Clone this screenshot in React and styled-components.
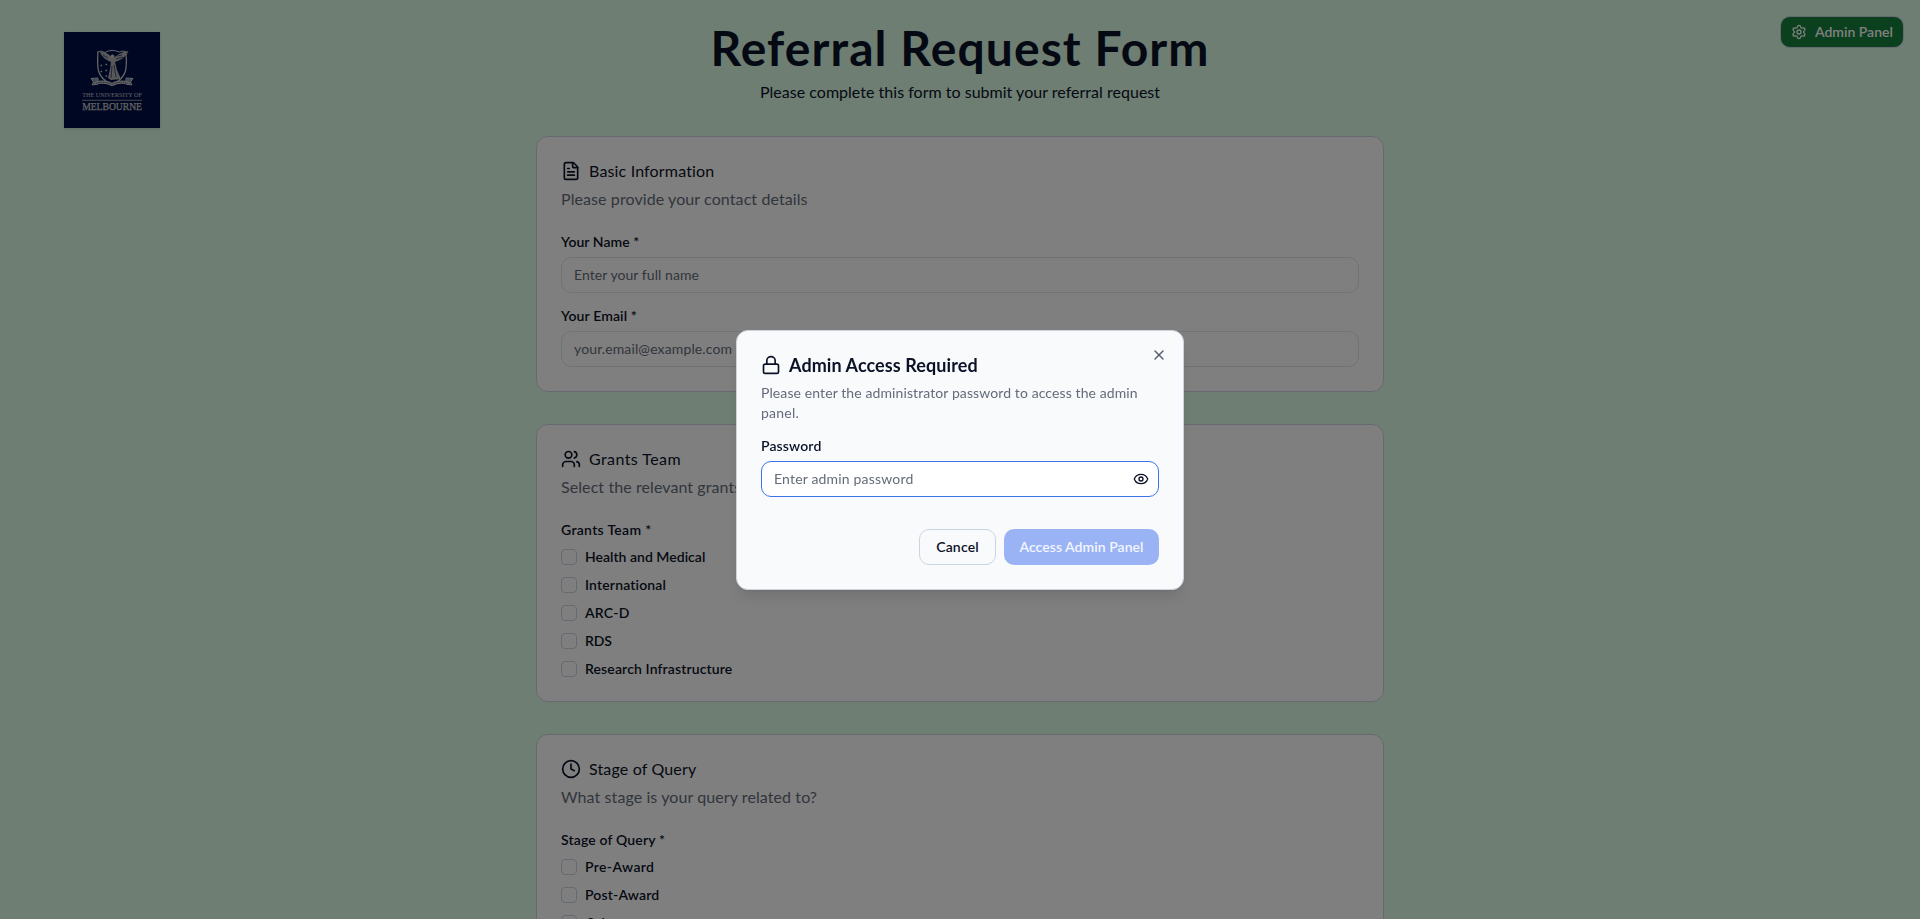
import React from 'react';
import styled, { createGlobalStyle } from 'styled-components';
import { FileText, Users, Clock, Settings, Lock, X, Eye } from 'lucide-react';

const ink = '#0b1226';
const muted = '#646b79';
const line = '#cbd5e1';

const GlobalStyle = createGlobalStyle`
  *, *::before, *::after { box-sizing: border-box; }
  body {
    margin: 0;
    overflow: hidden;
    background: #dcfce7;
    color: ${ink};
    font-family: Lato, "Liberation Sans", sans-serif;
    font-size: 16px;
    line-height: 24px;
  }
  h1, h2, h3, p { margin: 0; }
`;

const Track = styled.span`
  letter-spacing: ${(p) => p.$by || 0}px;
  white-space: nowrap;
`;

const Page = styled.div`
  position: relative;
  height: 100vh;
  overflow: hidden;
  padding-top: 24px;
`;

const Logo = styled.div`
  position: absolute;
  left: 64px;
  top: 32px;
  width: 96px;
  height: 96px;
  background: #000f46;
  box-shadow: 0 1px 3px rgba(0, 0, 0, 0.15);
  svg { display: block; }
`;

const AdminButton = styled.button`
  position: absolute;
  top: 16px;
  right: 16px;
  height: 32px;
  width: 124px;
  display: flex;
  align-items: center;
  gap: 8px;
  padding: 0 10px;
  border: 1px solid ${line};
  border-radius: 10px;
  background: #15803d;
  color: #fff;
  font: 600 14px/20px Lato, sans-serif;
`;

const Header = styled.header`
  display: flex;
  flex-direction: column;
  align-items: center;
  gap: 8px;
  margin-bottom: 32px;
`;

const PageTitle = styled.h1`
  font-size: 48px;
  line-height: 48px;
  font-weight: 700;
`;

const Column = styled.main`
  width: 848px;
  margin: 0 auto;
  display: flex;
  flex-direction: column;
  gap: 32px;
`;

const Card = styled.section`
  background: #fff;
  border: 1px solid ${line};
  border-radius: 12px;
  padding: 24px;
`;

const CardTitle = styled.h3`
  display: flex;
  align-items: center;
  gap: 8px;
  height: 20px;
  font-size: 16px;
  line-height: 16px;
  font-weight: 400;
`;

const CardNote = styled.p`
  margin-top: 6px;
  color: ${muted};
`;

const CardBody = styled.div`
  margin-top: 24px;
  display: flex;
  flex-direction: column;
  gap: ${(p) => p.$gap}px;
`;

const Field = styled.div`
  display: flex;
  flex-direction: column;
  gap: 8px;
`;

const Label = styled.label`
  font-size: 14px;
  line-height: 14px;
  font-weight: 600;
`;

const InputBox = styled.div`
  display: flex;
  align-items: center;
  justify-content: space-between;
  height: 36px;
  padding: 0 9px 0 12px;
  border: 1px solid ${(p) => (p.$focused ? '#3b74ea' : '#e0e5ee')};
  border-radius: 10px;
  background: #fff;
  color: ${muted};
  font-size: 14px;
  line-height: 20px;
  svg { color: ${ink}; }
`;

const Option = styled.div`
  display: flex;
  align-items: center;
  gap: 8px;
  height: 16px;
`;

const Checkbox = styled.span`
  width: 16px;
  height: 16px;
  border: 1px solid ${line};
  border-radius: 4px;
`;

const Overlay = styled.div`
  position: fixed;
  inset: 0;
  display: flex;
  align-items: center;
  justify-content: center;
  padding-top: 1px;
  background: rgba(0, 0, 0, 0.5);
`;

const Dialog = styled.div`
  position: relative;
  width: 448px;
  height: 260px;
  padding: 24px;
  border: 1px solid ${line};
  border-radius: 12px;
  background: #f8fafc;
  box-shadow: 0 10px 15px -3px rgba(0, 0, 0, 0.1), 0 4px 6px -4px rgba(0, 0, 0, 0.1);
`;

const CloseButton = styled.span`
  position: absolute;
  top: 16px;
  right: 16px;
  color: #555d6c;
  svg { display: block; }
`;

const DialogTitle = styled.h2`
  display: flex;
  align-items: center;
  gap: 8px;
  height: 20px;
  font-size: 18px;
  line-height: 18px;
  font-weight: 700;
`;

const DialogNote = styled.p`
  margin: 8px 0 16px;
  color: ${muted};
  font-size: 14px;
  line-height: 20px;
`;

const Actions = styled.div`
  display: flex;
  justify-content: flex-end;
  gap: 8px;
  margin-top: 32px;
`;

const Button = styled.button`
  width: ${(p) => p.$width}px;
  height: 36px;
  padding: 0;
  border: ${(p) => (p.$primary ? '0' : `1px solid ${line}`)};
  border-radius: 10px;
  background: ${(p) => (p.$primary ? '#9ab3f5' : '#f8fafc')};
  color: ${(p) => (p.$primary ? '#f3f6fe' : ink)};
  font: 600 14px/20px Lato, sans-serif;
`;

function Crest() {
  return (
    <svg width="96" height="96" viewBox="0 0 96 96" fill="none" stroke="#c8c8c8">
      <path d="M34 19.5 Q33 32 34.5 39 Q36.500 47 48 53 Q59.500 47 61.500 39 Q63 32 62 22" strokeWidth="1.300" />
      <path d="M33.500 20 Q37 18 41 20.500 Q48 16.500 55 20 Q59 18 62.500 20" strokeWidth="1" />
      <path d="M48 26 C45 21 40 20 36 20 C38 25 42 28 47 30 L46 37 L44 46 L47 48 L57 47 L53 38 L51 30 C57 28 62 25 64.500 19 C58 20 54 22 50 26 Z" fill="#b0b0b0" stroke="none" />
      <circle cx="48.500" cy="24.500" r="2" fill="#c8c8c8" stroke="none" />
      <path d="M50 33 L52 45 M48 34 L47 46 M53 24 L58 23 M52 27 L59 25 M39 23 L44 26" stroke="#000f46" strokeWidth="0.600" />
      <path d="M36.500 33.500h1.600M41.500 32.500h1.600M36.500 39.500h1.600M41.500 38.500h1.600M41.500 44h1.600" strokeWidth="1.600" />
      <path d="M34 46 L27 46.500 L29.500 50 L28 53 L34 52 Z M62 46 L69 46.500 L66.500 50 L68 53 L62 52 Z" fill="#8d93ab" strokeWidth="1" />
      <path d="M31 51.500 Q40 48.500 48 52.500 Q56 48.500 65 51.500" strokeWidth="3.200" />
      <path d="M32 51.500 Q40 48.500 48 52.500 Q56 48.500 64 51.500" stroke="#3d4770" strokeWidth="1" strokeDasharray="1.500 0.800" />
      <path d="M18.200 68.300H78" strokeWidth="0.700" />
      <g fill="#c8c8c8" stroke="none" fontFamily="'Liberation Serif', serif">
        <text x="18.200" y="64.800" fontSize="6.800" textLength="59.800" lengthAdjust="spacingAndGlyphs">THE UNIVERSITY OF</text>
        <text x="18.200" y="77.800" fontSize="10" textLength="59.800" stroke="#c8c8c8" strokeWidth="0.250" lengthAdjust="spacingAndGlyphs">MELBOURNE</text>
      </g>
    </svg>
  );
}

function Choices({ title, track, options }) {
  return (
    <CardBody $gap={12}>
      <Label><Track $by={track}>{title}</Track></Label>
      {options.map(([name, by]) => (
        <Option key={name}>
          <Checkbox />
          <Label><Track $by={by}>{name}</Track></Label>
        </Option>
      ))}
    </CardBody>
  );
}

export default function App() {
  return (
    <>
      <GlobalStyle />
      <Page>
        <Logo><Crest /></Logo>
        <AdminButton><Settings size={16} /><Track $by={0}>Admin Panel</Track></AdminButton>
        <Header>
          <PageTitle><Track $by={1.09}>Referral Request Form</Track></PageTitle>
          <p><Track $by={0.02}>Please complete this form to submit your referral request</Track></p>
        </Header>
        <Column>
          <Card>
            <CardTitle><FileText size={20} /><Track $by={0.16}>Basic Information</Track></CardTitle>
            <CardNote><Track $by={0.09}>Please provide your contact details</Track></CardNote>
            <CardBody $gap={16}>
              <Field>
                <Label><Track $by={0.05}>Your Name *</Track></Label>
                <InputBox><Track $by={0.064}>Enter your full name</Track></InputBox>
              </Field>
              <Field>
                <Label><Track $by={0.12}>Your Email *</Track></Label>
                <InputBox><Track $by={0.122}>your.email@example.com</Track></InputBox>
              </Field>
            </CardBody>
          </Card>
          <Card>
            <CardTitle><Users size={20} /><Track $by={0.42}>Grants Team</Track></CardTitle>
            <CardNote><Track $by={0.086}>Select the relevant grants team</Track></CardNote>
            <Choices
              title="Grants Team *"
              track={0.31}
              options={[
                ['Health and Medical', 0.02],
                ['International', 0.16],
                ['ARC-D', 0.2],
                ['RDS', -0.1],
                ['Research Infrastructure', 0.13],
              ]}
            />
          </Card>
          <Card>
            <CardTitle><Clock size={20} /><Track $by={0.15}>Stage of Query</Track></CardTitle>
            <CardNote><Track $by={0.09}>What stage is your query related to?</Track></CardNote>
            <Choices
              title="Stage of Query *"
              track={0.15}
              options={[['Pre-Award', 0.36], ['Post-Award', 0.16], ['Other', 0.1]]}
            />
          </Card>
        </Column>
      </Page>
      <Overlay>
        <Dialog>
          <CloseButton><X size={16} /></CloseButton>
          <DialogTitle><Lock size={20} /><Track $by={0.08}>Admin Access Required</Track></DialogTitle>
          <DialogNote>
            <Track $by={0.1}>Please enter the administrator password to access the admin</Track>{' '}
            <Track $by={0.237}>panel.</Track>
          </DialogNote>
          <Field>
            <Label><Track $by={0.13}>Password</Track></Label>
            <InputBox $focused>
              <Track $by={0.18}>Enter admin password</Track>
              <Eye size={16} />
            </InputBox>
          </Field>
          <Actions>
            <Button $width={77}><Track $by={0.156}>Cancel</Track></Button>
            <Button $width={155} $primary><Track $by={0.05}>Access Admin Panel</Track></Button>
          </Actions>
        </Dialog>
      </Overlay>
    </>
  );
}
